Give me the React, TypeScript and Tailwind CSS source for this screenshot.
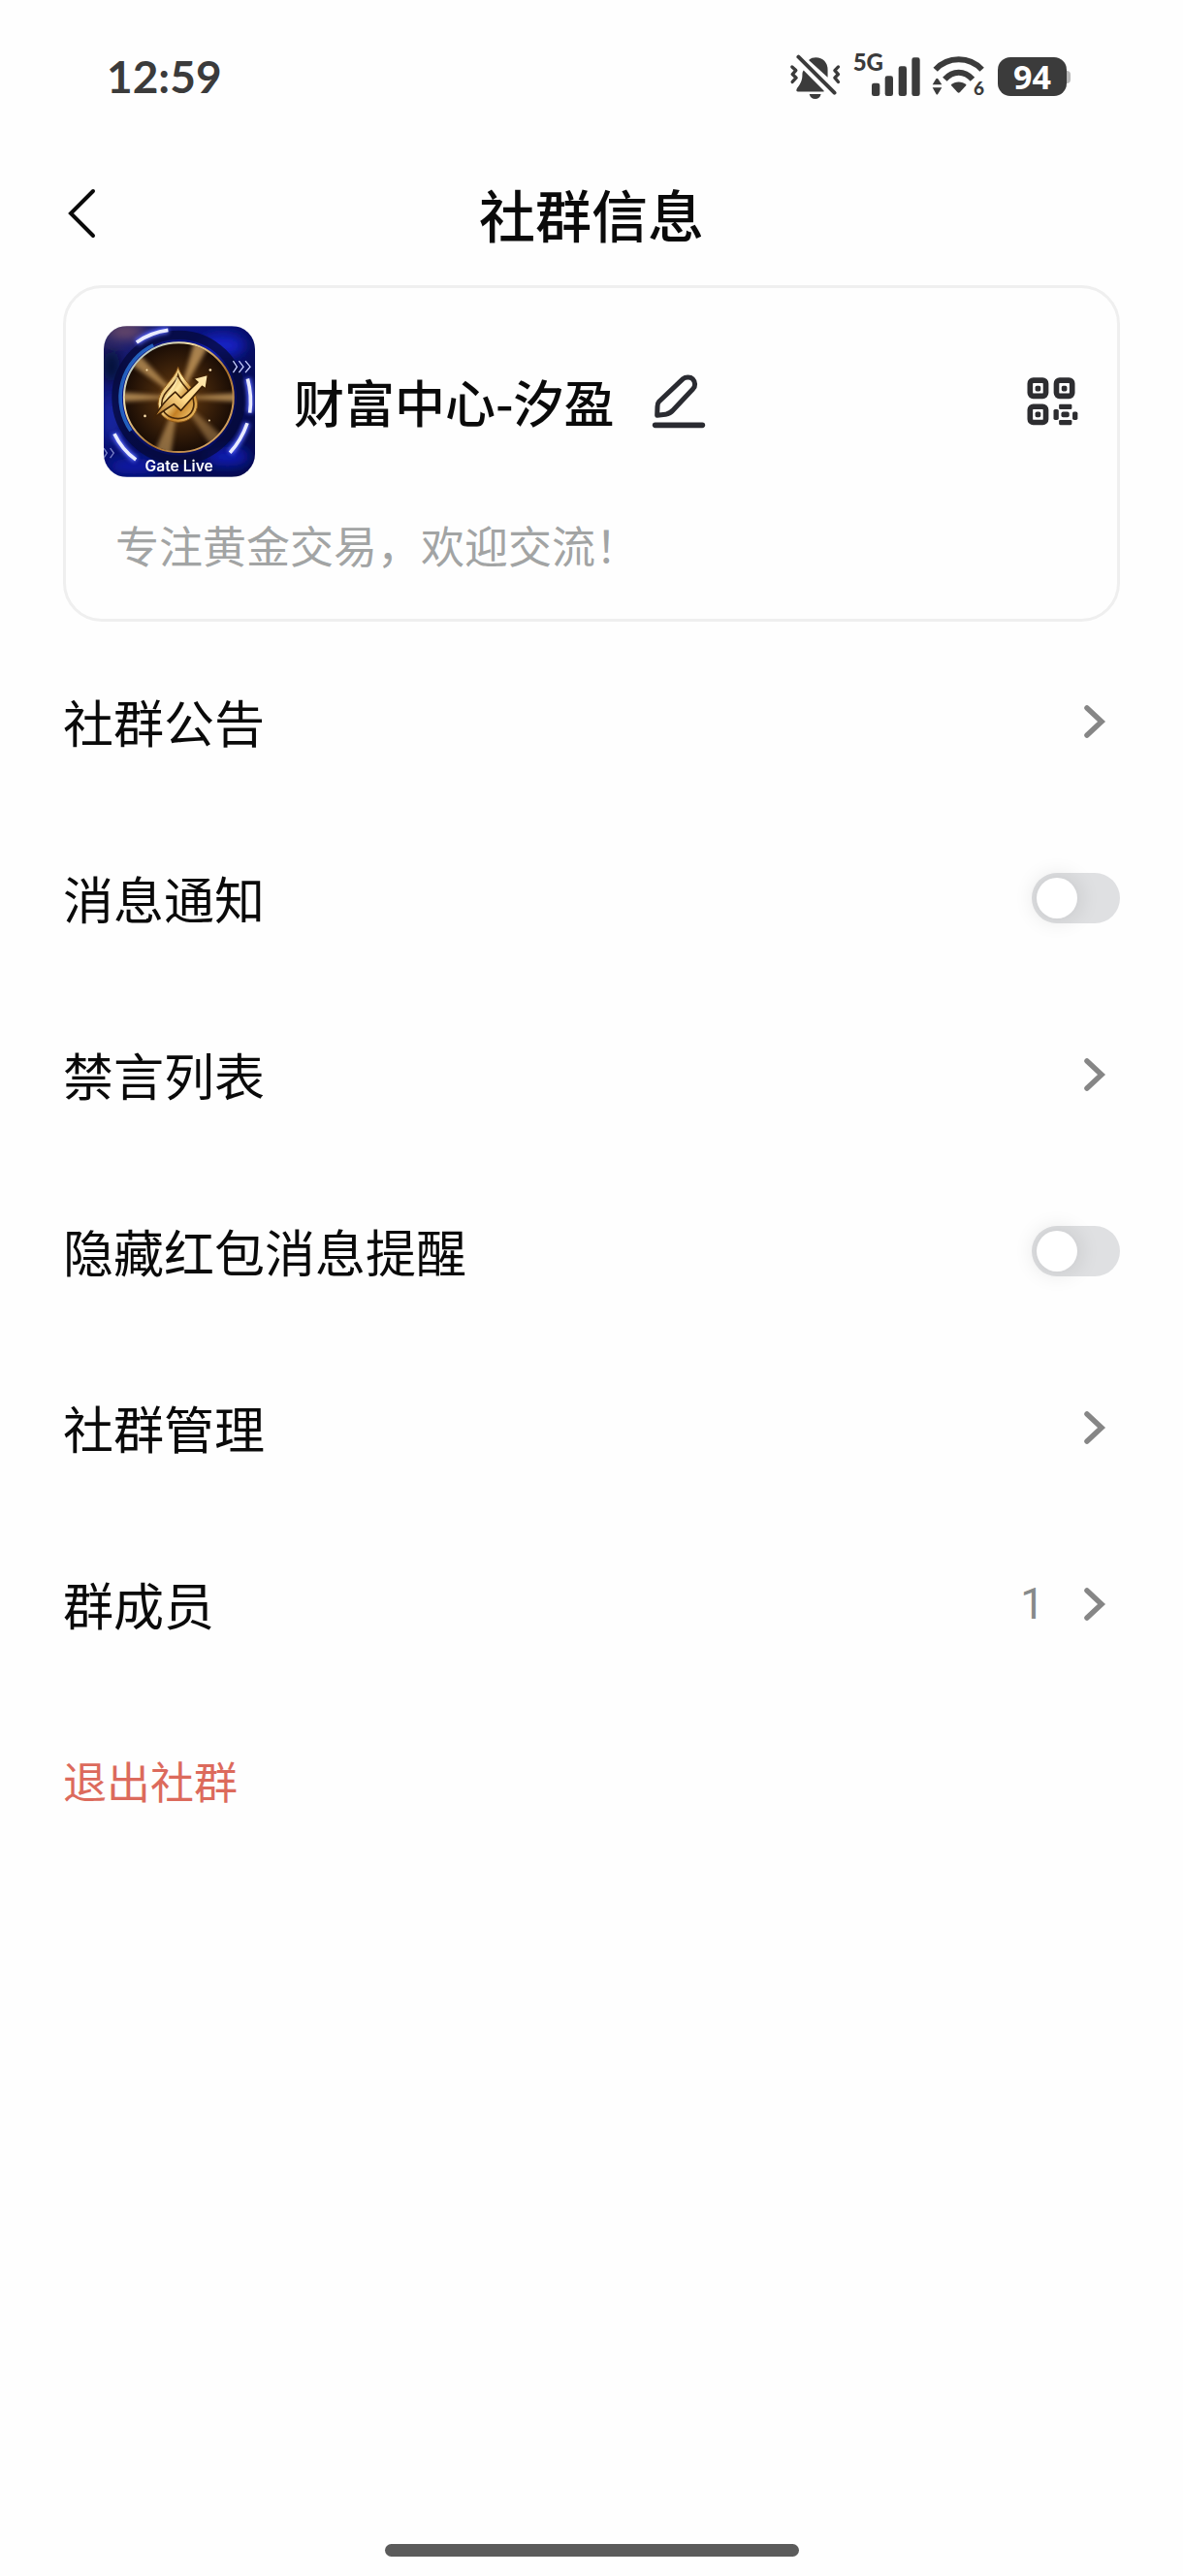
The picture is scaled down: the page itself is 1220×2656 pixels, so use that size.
import { useState } from "react";

function MutedBellIcon() {
  return (
    <svg viewBox="58 40 162 142" className="w-[54px] h-[47px]" fill="none" aria-hidden="true">
      <path
        d="M118 58 C124 52 132 50 140 50 C162 50 177 66 177 88 L177 112 Z"
        fill="#3b3b3b"
      />
      <path d="M102 90 L165 153 L165 156 L84 156 C78 156 79 150 82 145 C94 130 98 118 98 104 C98 98 99 94 102 90 Z" fill="#3b3b3b" />
      <path d="M120 164 H156 C154 174 147 179 138 179 C129 179 122 174 120 164 Z" fill="#3b3b3b" />
      <path d="M86 48 L198 160" stroke="#3b3b3b" strokeWidth="12" strokeLinecap="round" />
      <path d="M66 79 L78 90 L67 102 L79 113 L67 126" stroke="#3b3b3b" strokeWidth="10" strokeLinecap="round" strokeLinejoin="round" />
      <path d="M210 79 L199 90 L210 102 L199 113 L210 126" stroke="#3b3b3b" strokeWidth="10" strokeLinecap="round" strokeLinejoin="round" />
    </svg>
  );
}

function SignalIcon() {
  return (
    <svg viewBox="294 55 150 120" className="w-[50px] h-[40px]" fill="#3b3b3b" aria-hidden="true">
      <rect x="294" y="135" width="25" height="40" rx="7" />
      <rect x="335" y="113" width="25" height="62" rx="7" />
      <rect x="377" y="83" width="25" height="92" rx="7" />
      <rect x="418" y="56" width="25" height="119" rx="7" />
    </svg>
  );
}

function WifiIcon() {
  return (
    <svg viewBox="482 43 168 156" className="w-[56px] h-[52px]" fill="none" aria-hidden="true">
      <path d="M493 99 C532 57 598 57 637 99" stroke="#3b3b3b" strokeWidth="18" />
      <path d="M522 129 C547 101 583 101 608 129" stroke="#3b3b3b" strokeWidth="18" />
      <path d="M541 147 C554 134 576 134 589 147 L569 169 Q565 173 561 169 Z" fill="#3b3b3b" />
      <path d="M484 146 L495 128 Q498 124 501 128 L513 146 Z" fill="#3b3b3b" />
      <path d="M484 155 L495 174 Q498 179 501 174 L513 155 Z" fill="#3b3b3b" />
      <text x="611" y="178" fontFamily="Lato, sans-serif" fontWeight="900" fontSize="57" fill="#3b3b3b">
        6
      </text>
    </svg>
  );
}

function BackIcon() {
  return (
    <svg viewBox="0 0 32 54" className="w-[32px] h-[54px]" fill="none" aria-hidden="true">
      <path d="M28 4 L5 27 L28 50" stroke="#0a0a0a" strokeWidth="4" strokeLinecap="round" strokeLinejoin="miter" />
    </svg>
  );
}

function PencilIcon() {
  return (
    <svg viewBox="1176 76 168 168" className="w-[56px] h-[56px]" fill="none" stroke="#2a2b31" aria-hidden="true">
      <path
        d="M1199 160 L1273 90 C1281 83 1296 83 1303 90 C1312 99 1312 113 1304 121 L1242 187 C1236 194 1228 198 1219 200 L1193 203 L1194 176 C1194 170 1195 164 1199 160 Z"
        strokeWidth="15"
        strokeLinejoin="round"
      />
      <path d="M1187 233 H1333" strokeWidth="17" strokeLinecap="round" />
    </svg>
  );
}

function QrIcon() {
  return (
    <svg viewBox="85 85 163 150" className="w-[54px] h-[50px]" fill="#2d2d30" aria-hidden="true">
      <g fill="none" stroke="#2d2d30" strokeWidth="17">
        <rect x="95" y="94" width="49" height="49" rx="10" />
        <rect x="177" y="94" width="49" height="49" rx="10" />
        <rect x="95" y="176" width="49" height="49" rx="10" />
      </g>
      <rect x="111" y="111" width="17" height="17" rx="5" />
      <rect x="193" y="111" width="17" height="17" rx="5" />
      <rect x="111" y="192" width="17" height="17" rx="5" />
      <rect x="185" y="168" width="40" height="16" rx="4" />
      <rect x="185" y="217" width="40" height="16" rx="4" />
      <rect x="168" y="184" width="16" height="33" rx="5" />
      <rect x="227" y="192" width="16" height="25" rx="5" />
      <rect x="192" y="192" width="25" height="17" rx="6" />
    </svg>
  );
}

function ChevronIcon() {
  return (
    <svg viewBox="0 0 26 38" className="w-[26px] h-[38px]" fill="none" aria-hidden="true">
      <path d="M4 5 L19 19 L4 33" stroke="#868686" strokeWidth="5.5" strokeLinecap="round" strokeLinejoin="miter" />
    </svg>
  );
}

function GroupAvatar() {
  return (
    <svg
      viewBox="36 45 470 468"
      className="size-[156px] shrink-0 rounded-[24px]"
      role="img"
      aria-label="Gate Live"
    >
      <defs>
        <linearGradient id="bg" x1="0" y1="0" x2="1" y2="1">
          <stop offset="0" stopColor="#28245c" />
          <stop offset="0.3" stopColor="#0a1480" />
          <stop offset="0.6" stopColor="#060d5c" />
          <stop offset="1" stopColor="#050a48" />
        </linearGradient>
        <linearGradient id="rim" x1="0" y1="0" x2="1" y2="1">
          <stop offset="0" stopColor="#7fb0d8" />
          <stop offset="0.3" stopColor="#f3dfa8" />
          <stop offset="0.6" stopColor="#a8702c" />
          <stop offset="1" stopColor="#e9bc7c" />
        </linearGradient>
        <radialGradient id="disc">
          <stop offset="0" stopColor="#a4712e" />
          <stop offset="0.4" stopColor="#4a2a0c" />
          <stop offset="1" stopColor="#190c05" />
        </radialGradient>
        <linearGradient id="gold" x1="0" y1="0" x2="1" y2="1">
          <stop offset="0" stopColor="#b57420" />
          <stop offset="0.4" stopColor="#ffe7a0" />
          <stop offset="0.65" stopColor="#c47f24" />
          <stop offset="1" stopColor="#f7cf78" />
        </linearGradient>
        <linearGradient id="arrow" x1="0" y1="1" x2="1" y2="0">
          <stop offset="0" stopColor="#a8691f" />
          <stop offset="0.5" stopColor="#ffd988" />
          <stop offset="1" stopColor="#ffe9b4" />
        </linearGradient>
        <clipPath id="coin">
          <circle cx="269" cy="266" r="168" />
        </clipPath>
        <filter id="soft" x="-50%" y="-50%" width="200%" height="200%">
          <feGaussianBlur stdDeviation="7" />
        </filter>
        <filter id="haze" x="-50%" y="-50%" width="200%" height="200%">
          <feGaussianBlur stdDeviation="20" />
        </filter>
      </defs>

      <rect x="36" y="45" width="470" height="468" fill="url(#bg)" />
      <g filter="url(#haze)">
        <ellipse cx="105" cy="62" rx="60" ry="22" fill="#8a5a6c" opacity="0.8" />
        <ellipse cx="405" cy="105" rx="70" ry="34" fill="#1522c8" />
        <ellipse cx="60" cy="330" rx="22" ry="70" fill="#1a2ba8" />
        <ellipse cx="420" cy="450" rx="70" ry="30" fill="#0f1fb4" />
        <ellipse cx="130" cy="480" rx="80" ry="24" fill="#0d1dae" />
        <ellipse cx="60" cy="170" rx="26" ry="50" fill="#050a30" />
      </g>

      <circle cx="269" cy="266" r="194" fill="none" stroke="#050a38" strokeWidth="28" opacity="0.75" />
      <path d="M120 370 A180 180 0 0 1 190 104" fill="none" stroke="#2c7be0" strokeWidth="11" opacity="0.75" />
      <circle cx="269" cy="266" r="170" fill="url(#disc)" stroke="url(#rim)" strokeWidth="6" />
      <g clipPath="url(#coin)">
        <g filter="url(#soft)" fill="#d6a765">
          <path d="M269 266 L318 90 L362 106 Z" opacity="0.75" />
          <path d="M269 266 L112 158 L142 128 Z" opacity="0.7" />
          <path d="M269 266 L90 250 L90 280 Z" opacity="0.75" />
          <path d="M269 266 L450 252 L450 280 Z" opacity="0.75" />
          <path d="M269 266 L196 430 L244 446 Z" opacity="0.6" />
          <path d="M269 266 L372 420 L408 390 Z" opacity="0.45" />
        </g>
      </g>

      <path
        d="M267 172 C279 214 327 238 327 286 C327 320 301 343 267 343 C233 343 205 320 205 286 C205 238 255 214 267 172 Z"
        fill="url(#gold)"
        stroke="#8a5618"
        strokeWidth="3"
      />
      <path
        d="M267 198 C276 230 316 248 316 286 C316 314 295 332 267 332 C239 332 216 314 216 286 C216 248 258 230 267 198 Z"
        fill="url(#gold)"
        stroke="#4d2b0a"
        strokeWidth="5"
      />
      <path d="M264 206 C262 232 232 254 228 280" fill="none" stroke="#fff0b8" strokeWidth="6" strokeLinecap="round" opacity="0.7" />
      <path
        d="M190 332 C210 296 230 272 258 249 L276 268 L328 219 L314 207 L360 195 L353 240 L342 232 L276 307 L254 287 C234 300 212 314 190 332 Z"
        fill="url(#arrow)"
        stroke="#3e2106"
        strokeWidth="5"
        strokeLinejoin="round"
      />
      <g fill="#ffe3b0">
        <circle cx="170" cy="181" r="3" />
        <circle cx="367" cy="181" r="4" />
        <circle cx="164" cy="324" r="4" />
        <circle cx="364" cy="338" r="3" />
      </g>

      {/* glowing arcs around the coin */}
      <g fill="none" stroke="#5a68ff" strokeWidth="20" filter="url(#soft)">
        <path d="M138 95 Q182 64 236 57" />
        <path d="M483 208 Q497 260 490 314" />
        <path d="M482 346 Q463 400 428 438" />
        <path d="M69 379 Q92 428 136 460" />
      </g>
      <g fill="none" stroke="#e9ebff" strokeWidth="11">
        <path d="M138 95 Q182 64 236 57" />
        <path d="M483 208 Q497 260 490 314" />
        <path d="M482 346 Q463 400 428 438" />
        <path d="M69 379 Q92 428 136 460" />
      </g>
      <g fill="none" stroke="#c6ceff" strokeWidth="4">
        <path d="M438 153 L450 171 L438 189" />
        <path d="M456 153 L470 171 L456 189" />
        <path d="M476 153 L491 171 L476 189" />
        <path d="M36 424 L46 439 L36 454" opacity="0.6" />
        <path d="M56 424 L67 439 L56 454" opacity="0.6" />
      </g>
      <text
        x="270"
        y="496"
        textAnchor="middle"
        fontFamily="Inter, sans-serif"
        fontWeight="600"
        fontSize="47"
        fill="#ffffff"
      >
        Gate Live
      </text>
    </svg>
  );
}

function StatusBar() {
  return (
    <div className="flex h-[158px] items-center justify-between pl-[110px] pr-[116px] text-[#3b3b3b]">
      <time className="font-[Lato] text-[46px] leading-[56px] font-bold">12:59</time>
      <div className="flex items-center gap-3">
        <MutedBellIcon />
        <div className="flex h-12 items-end pb-1">
          <span className="-mr-3 self-start font-[Lato] text-[24px] leading-[18px] font-black">5G</span>
          <SignalIcon />
        </div>
        <WifiIcon />
        <div className="flex items-center">
          <span className="flex h-10 w-[71px] items-center justify-center rounded-[13px] bg-[#3b3b3b] font-['Open_Sans'] text-[34px] leading-[38px] font-bold text-white">
            94
          </span>
          <span className="h-[13px] w-1 rounded-r-sm bg-[#b8b8b8]" />
        </div>
      </div>
    </div>
  );
}

function LinkRow({ label, value }: { label: string; value?: string }) {
  return (
    <li>
      <button type="button" className="flex h-[182px] w-full items-center justify-between pr-3 text-left">
        <span>{label}</span>
        <span className="flex items-center gap-10">
          {value && <span className="font-[Roboto] text-[44px] leading-[56px] text-[#868a8a]">{value}</span>}
          <ChevronIcon />
        </span>
      </button>
    </li>
  );
}

function SwitchRow({ id, label }: { id: string; label: string }) {
  const [on, setOn] = useState(false);

  return (
    <li className="flex h-[182px] items-center justify-between">
      <label htmlFor={id}>{label}</label>
      <input
        id={id}
        type="checkbox"
        role="switch"
        checked={on}
        onChange={(e) => setOn(e.target.checked)}
        className="flex h-[52px] w-[91px] cursor-pointer appearance-none items-center rounded-full bg-[#dfe0e2] px-[5px] before:size-[42px] before:rounded-full before:bg-white before:shadow-[0_0_24px_rgba(0,0,0,0.14)] checked:justify-end checked:bg-blue-600"
      />
    </li>
  );
}

export default function App() {
  return (
    <div className="flex min-h-screen flex-col bg-[#fefefe] font-['Noto_Sans_CJK_SC',sans-serif] text-[#0a0a0a]">
      <StatusBar />

      <header className="grid h-[124px] grid-cols-[1fr_auto_1fr] items-center px-[68px]">
        <button type="button" aria-label="返回" className="justify-self-start">
          <BackIcon />
        </button>
        <h1 className="text-[58px] leading-[80px] font-medium">社群信息</h1>
      </header>

      <main className="flex-1 px-[65px] pt-3">
        <section className="rounded-[40px] border-3 border-[#efefef] px-[39px] pt-[39px] pb-11">
          <div className="flex items-center">
            <GroupAvatar />
            <h2 className="ml-10 text-[52px] leading-[72px] font-medium">财富中心-汐盈</h2>
            <button type="button" aria-label="编辑" className="ml-[38px]">
              <PencilIcon />
            </button>
            <button type="button" aria-label="二维码" className="ml-auto">
              <QrIcon />
            </button>
          </div>
          <p className="mt-[38px] px-3 text-[45px] leading-[64px] text-[#a2a4a4]">
            专注黄金交易，欢迎交流！
          </p>
        </section>

        <ul className="pt-3 text-[52px] leading-[72px]">
          <LinkRow label="社群公告" />
          <SwitchRow id="notify" label="消息通知" />
          <LinkRow label="禁言列表" />
          <SwitchRow id="hide-red-packet" label="隐藏红包消息提醒" />
          <LinkRow label="社群管理" />
          <LinkRow label="群成员" value="1" />
          <li>
            <button type="button" className="flex h-[182px] items-center text-[45px] text-[#dc6a5c]">
              退出社群
            </button>
          </li>
        </ul>
      </main>

      <footer className="flex justify-center pb-5">
        <div className="h-[13px] w-[35%] rounded-full bg-[#5b5b5b]" />
      </footer>
    </div>
  );
}
